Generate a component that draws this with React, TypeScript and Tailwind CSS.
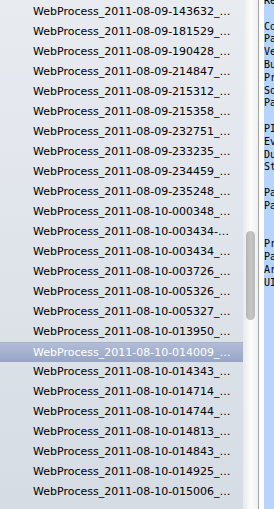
const FILES = [
  'WebProcess_2011-08-09-143632_…',
  'WebProcess_2011-08-09-181529_…',
  'WebProcess_2011-08-09-190428_…',
  'WebProcess_2011-08-09-214847_…',
  'WebProcess_2011-08-09-215312_…',
  'WebProcess_2011-08-09-215358_…',
  'WebProcess_2011-08-09-232751_…',
  'WebProcess_2011-08-09-233235_…',
  'WebProcess_2011-08-09-234459_…',
  'WebProcess_2011-08-09-235248_…',
  'WebProcess_2011-08-10-000348_…',
  'WebProcess_2011-08-10-003434-…',
  'WebProcess_2011-08-10-003434_…',
  'WebProcess_2011-08-10-003726_…',
  'WebProcess_2011-08-10-005326_…',
  'WebProcess_2011-08-10-005327_…',
  'WebProcess_2011-08-10-013950_…',
  'WebProcess_2011-08-10-014009_…',
  'WebProcess_2011-08-10-014343_…',
  'WebProcess_2011-08-10-014714_…',
  'WebProcess_2011-08-10-014744_…',
  'WebProcess_2011-08-10-014813_…',
  'WebProcess_2011-08-10-014843_…',
  'WebProcess_2011-08-10-014925_…',
  'WebProcess_2011-08-10-015006_…',
];

const SELECTED = 17;

// hang report, only the first columns are visible at this width
const REPORT = [
  'Report Version:  7',
  '',
  'Command:         WebProcess',
  'Path:            /System/Library/',
  'Version:         5.1',
  'Build Version:   1',
  'Project Name:    WebKit2',
  'Source Version:  7534048000000000',
  'Parent:          Safari [212]',
  '',
  'PID:             224',
  'Event:           hang',
  'Duration:        3.42s',
  'Steps:           35',
  '',
  'Pageins:         0',
  'Pageouts:        0',
  '',
  '',
  'Process:         WebProcess [224]',
  'Path:            /System/Library/',
  'Architecture:    x86_64',
  'UID:             501',
];

export default function App() {
  return (
    <div className="flex h-[509px] w-[274px] overflow-hidden bg-white">
      <div
        className="w-[243px] flex-none bg-gradient-to-b from-[#e8ecf1] to-[#d6dce4] pt-[2px] text-[11px] text-black"
        style={{ fontFamily: '"DejaVu Sans", Verdana, sans-serif' }}
      >
        {FILES.map((name, i) =>
          i === SELECTED ? (
            <div
              key={name}
              className="h-[20px] truncate border-t border-[#a6b2cc] bg-gradient-to-b from-[#b2bcd7] to-[#97a5c5] pl-[33px] leading-[19px] whitespace-nowrap text-white"
            >
              {name}
            </div>
          ) : (
            <div key={name} className="h-[20px] truncate pl-[33px] leading-[20px] whitespace-nowrap">
              {name}
            </div>
          ),
        )}
      </div>

      <div className="flex w-[15px] flex-none flex-col bg-gradient-to-r from-[#e9e9e9] via-[#fbfbfb] to-[#f2f2f2] pt-[231px] pl-[3px]">
        <div className="h-[89px] w-[9px] rounded-full bg-gradient-to-r from-[#b4b4b4] via-[#c6c6c6] to-[#bababa]" />
      </div>

      <div className="w-px flex-none bg-[#a4a4a4]" />
      <div className="w-[5px] flex-none bg-white" />

      <div
        className="flex-1 overflow-hidden bg-[#b5d5ff] pt-0 text-[10px] leading-[12.8px] whitespace-pre text-black"
        style={{ fontFamily: '"DejaVu Sans Mono", "Liberation Mono", monospace' }}
      >
        <div className="-mt-[5px]">
          {REPORT.map((line, i) => (
            <div key={i} className="h-[12.8px]">
              {line}
            </div>
          ))}
        </div>
      </div>
    </div>
  );
}
